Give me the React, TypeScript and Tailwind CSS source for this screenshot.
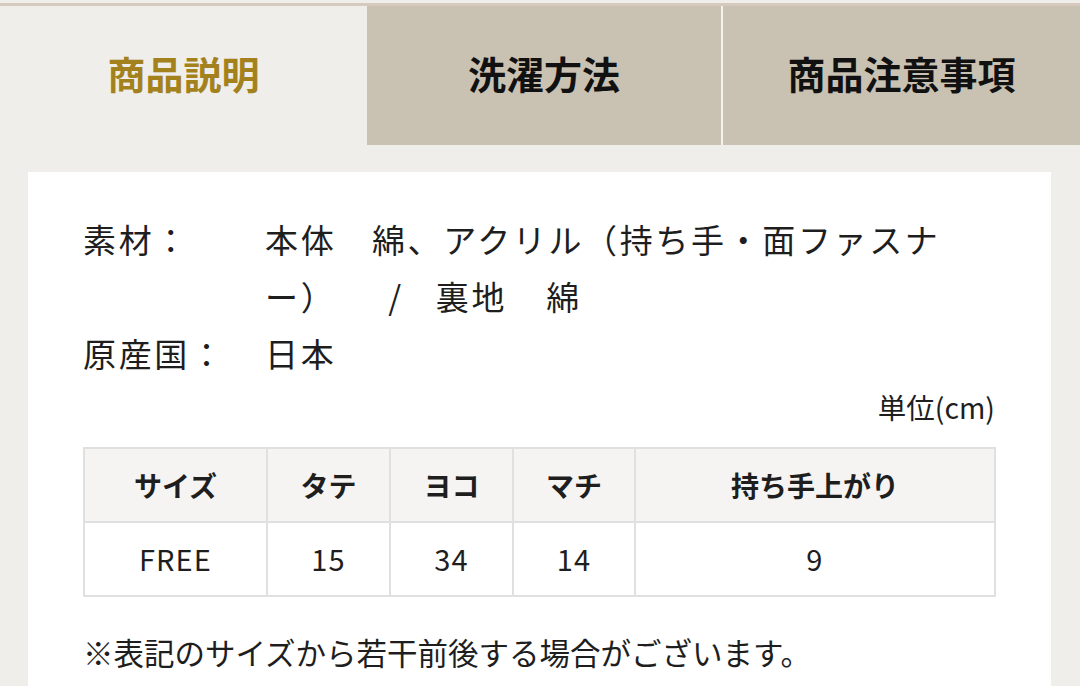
import React from "react";

const font = { fontFamily: '"Noto Sans CJK JP", "Noto Sans", sans-serif' };

export default function App() {
  const cols = [
    { h: "サイズ", v: "FREE", w: "w-[183px]" },
    { h: "タテ", v: "15", w: "w-[123px]" },
    { h: "ヨコ", v: "34", w: "w-[123px]" },
    { h: "マチ", v: "14", w: "w-[122px]" },
    { h: "持ち手上がり", v: "9", w: "" },
  ];
  return (
    <div
      className="w-[1080px] h-[686px] overflow-hidden bg-[#efeeea] pt-[3px]"
      style={font}
    >
      <div className="h-[3px] bg-[#d6c9bd]" />
      <div className="flex h-[139px]">
        <div className="w-[367px] flex items-center justify-center bg-[#efeeea] text-[38px] font-bold text-[#a3811c] pb-[6px]">
          商品説明
        </div>
        <div className="w-[354px] flex items-center justify-center bg-[#c9c2b2] text-[38px] font-bold text-[#111] pb-[6px]">
          洗濯方法
        </div>
        <div className="w-[2px] bg-[#f4f2ee]" />
        <div className="flex-1 flex items-center justify-center bg-[#c9c2b2] text-[38px] font-bold text-[#111] pb-[6px]">
          商品注意事項
        </div>
      </div>
      <div className="ml-[28px] mr-[29px] mt-[27px] bg-white px-[55px] pt-[39px] h-[600px] text-[#1e1e1e]">
        <div className="flex text-[33px] leading-[57px] tracking-[0.08em]">
          <div className="w-[182px] shrink-0">素材：</div>
          <div className="flex flex-col">
            <div className="whitespace-nowrap">本体　綿、アクリル（持ち手・面ファスナ</div>
            <div className="whitespace-nowrap">
              ー）<span className="ml-[52px]">/</span>
              <span className="ml-[32px]">裏地</span>
              <span className="ml-[39px]">綿</span>
            </div>
          </div>
        </div>
        <div className="flex text-[33px] leading-[57px] tracking-[0.08em]">
          <div className="w-[182px] shrink-0">原産国：</div>
          <div>日本</div>
        </div>
        <div className="text-right text-[28.5px] leading-[40px] mt-[5px] pr-[1px]">単位(cm)</div>
        <table className="mt-[20px] w-[913px] border-collapse border-2 border-[#e0e0e0]">
          <thead>
            <tr className="bg-[#f5f4f2] h-[74px]">
              {cols.map((c) => (
                <th key={c.h} className={`${c.w} border-2 border-[#e0e0e0] font-bold text-center text-[28px] text-[#1e1e1e]`}>
                  {c.h}
                </th>
              ))}
            </tr>
          </thead>
          <tbody>
            <tr className="h-[74px]">
              {cols.map((c) => (
                <td key={c.h} className="border-2 border-[#e0e0e0] text-center font-normal text-[29px] tracking-[0.04em]">
                  {c.v}
                </td>
              ))}
            </tr>
          </tbody>
        </table>
        <div className="mt-[33px] text-[30.5px] leading-[44px] whitespace-nowrap">※表記のサイズから若干前後する場合がございます。</div>
      </div>
    </div>
  );
}
